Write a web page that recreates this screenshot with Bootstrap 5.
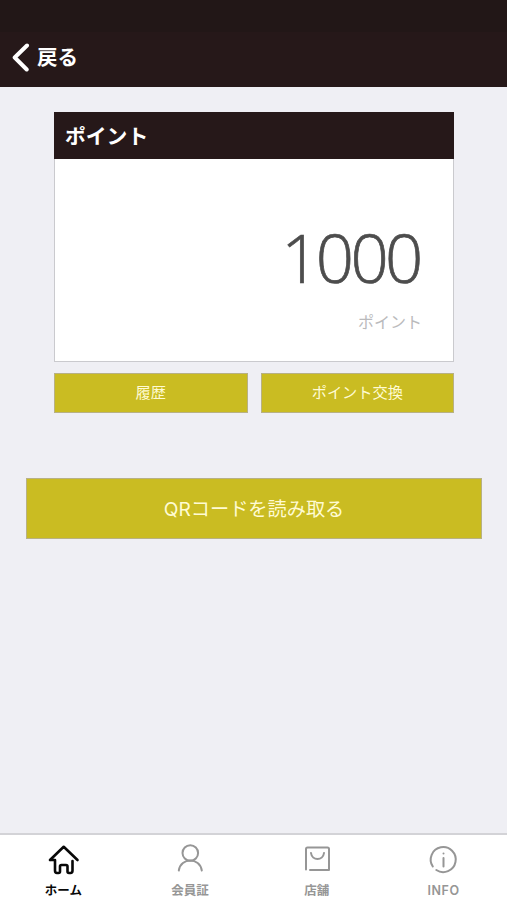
<!DOCTYPE html>
<html lang="ja">
<head>
<meta charset="utf-8">
<meta name="viewport" content="width=device-width, initial-scale=1">
<title>ポイント</title>
<link href="https://cdn.jsdelivr.net/npm/bootstrap@5.3.0/dist/css/bootstrap.min.css" rel="stylesheet">
<style>
body{background:#efeff4;font-family:Inter,"Noto Sans CJK JP",sans-serif;height:100vh;overflow:hidden}
.status-strip{height:32px;background:#221717}
.top-nav{height:55px;background:#261819;padding:0 0 4px 11px}
.back-link{font-size:20.5px;font-weight:700;line-height:1;gap:7px}
.back-link span{padding-top:2px}
.point-area{padding:25px 53px 0 54px}
.point-card{border:1px solid #cacace;height:250px}
.point-head{background:#261819;height:47px;margin:-1px -1px 0;padding:3px 0 0 11px;font-size:20.8px;font-weight:700;line-height:1}
.point-body{padding:0 31px 0 0}
.point-value{font-family:"Open Sans","Noto Sans",sans-serif;font-weight:300;font-size:67px;line-height:70px;letter-spacing:-3.7px;color:#4d4d4d;margin:63px 2.5px 0 0;-webkit-text-stroke:.7px #4d4d4d}
.point-unit{font-size:16px;line-height:24px;color:#bababc;margin-top:18px}
.btn-olive,.btn-olive:hover{background:#cabc22;border:1px solid #b8b184;color:#fffbd2;line-height:1}
.btn-half{height:40px;font-size:15.2px;padding:0}
.pair{gap:13px;margin-top:11px}
.btn-scan{height:61px;font-size:19.2px;padding:2px 0 0}
.scan-area{padding:65px 25px 0 26px}
.tabs{height:67px;border-top:2px solid #d3d3d7;padding-top:7px}
.tab{color:#969696;font-size:12.5px;font-weight:700;line-height:16px;gap:7px}
.tab svg{width:34px;height:34px;fill:none;stroke:currentColor;stroke-width:2;stroke-linecap:round;stroke-linejoin:round}
.tab.current{color:#080808}
.tab.current svg{stroke-width:2.6}
.info-label{font-weight:600;letter-spacing:.6px;font-size:12.5px}
</style>
<script src="https://cdn.jsdelivr.net/npm/bootstrap@5.3.0/dist/js/bootstrap.bundle.min.js"></script>
</head>
<body class="d-flex flex-column">
<header>
  <div class="status-strip"></div>
  <nav class="top-nav d-flex align-items-center">
    <a href="#" class="back-link d-flex align-items-center text-white text-decoration-none">
      <svg width="19" height="30" viewBox="0 0 19 30" fill="none" stroke="#fff" stroke-width="4" stroke-linecap="round" stroke-linejoin="round"><path d="M16 2.500 3.700 14.500 15.700 26.500"/></svg>
      <span>戻る</span>
    </a>
  </nav>
</header>
<main class="flex-grow-1">
  <section class="point-area">
    <div class="point-card bg-white">
      <div class="point-head text-white d-flex align-items-center">ポイント</div>
      <div class="point-body text-end">
        <div class="point-value">1000</div>
        <div class="point-unit">ポイント</div>
      </div>
    </div>
    <div class="pair d-flex">
      <button type="button" class="btn btn-olive btn-half rounded-0 w-100">履歴</button>
      <button type="button" class="btn btn-olive btn-half rounded-0 w-100">ポイント交換</button>
    </div>
  </section>
  <section class="scan-area">
    <button type="button" class="btn btn-olive btn-scan rounded-0 w-100">QRコードを読み取る</button>
  </section>
</main>
<footer class="tabs bg-white d-flex">
  <a href="#" class="tab current w-25 d-flex flex-column align-items-center text-decoration-none">
    <svg viewBox="0 0 34 34"><path d="M4 18 17.700 4.800 31.500 18M4 18h5v10.500q0 2.500 2 2.500h1.500q1.500 0 1.500-1.500v-5q0-1.500 1.500-1.500h4.500q1.500 0 1.500 1.500v5q0 1.500 1.500 1.500h1.500q2 0 2-2.500V19"/></svg>
    <span>ホーム</span>
  </a>
  <a href="#" class="tab w-25 d-flex flex-column align-items-center text-decoration-none">
    <svg viewBox="0 0 34 34"><circle cx="17.300" cy="11" r="7.800"/><path d="M5.800 28.500C7.800 15.300 26.800 15.300 28.800 28.500"/></svg>
    <span>会員証</span>
  </a>
  <a href="#" class="tab w-25 d-flex flex-column align-items-center text-decoration-none">
    <svg viewBox="0 0 34 34"><path d="M6 27.500V7q0-1.500 1.500-1.500H27.500q1.500 0 1.500 1.500V28H10M11 11c1 8 12 8 13 0"/></svg>
    <span>店舗</span>
  </a>
  <a href="#" class="tab w-25 d-flex flex-column align-items-center text-decoration-none">
    <svg viewBox="0 0 34 34"><path d="M5.800 24.500A12.500 12.500 0 1 1 9.300 28M16.500 16v8.500M16.500 11.500v.1"/></svg>
    <span class="info-label">INFO</span>
  </a>
</footer>
</body>
</html>
